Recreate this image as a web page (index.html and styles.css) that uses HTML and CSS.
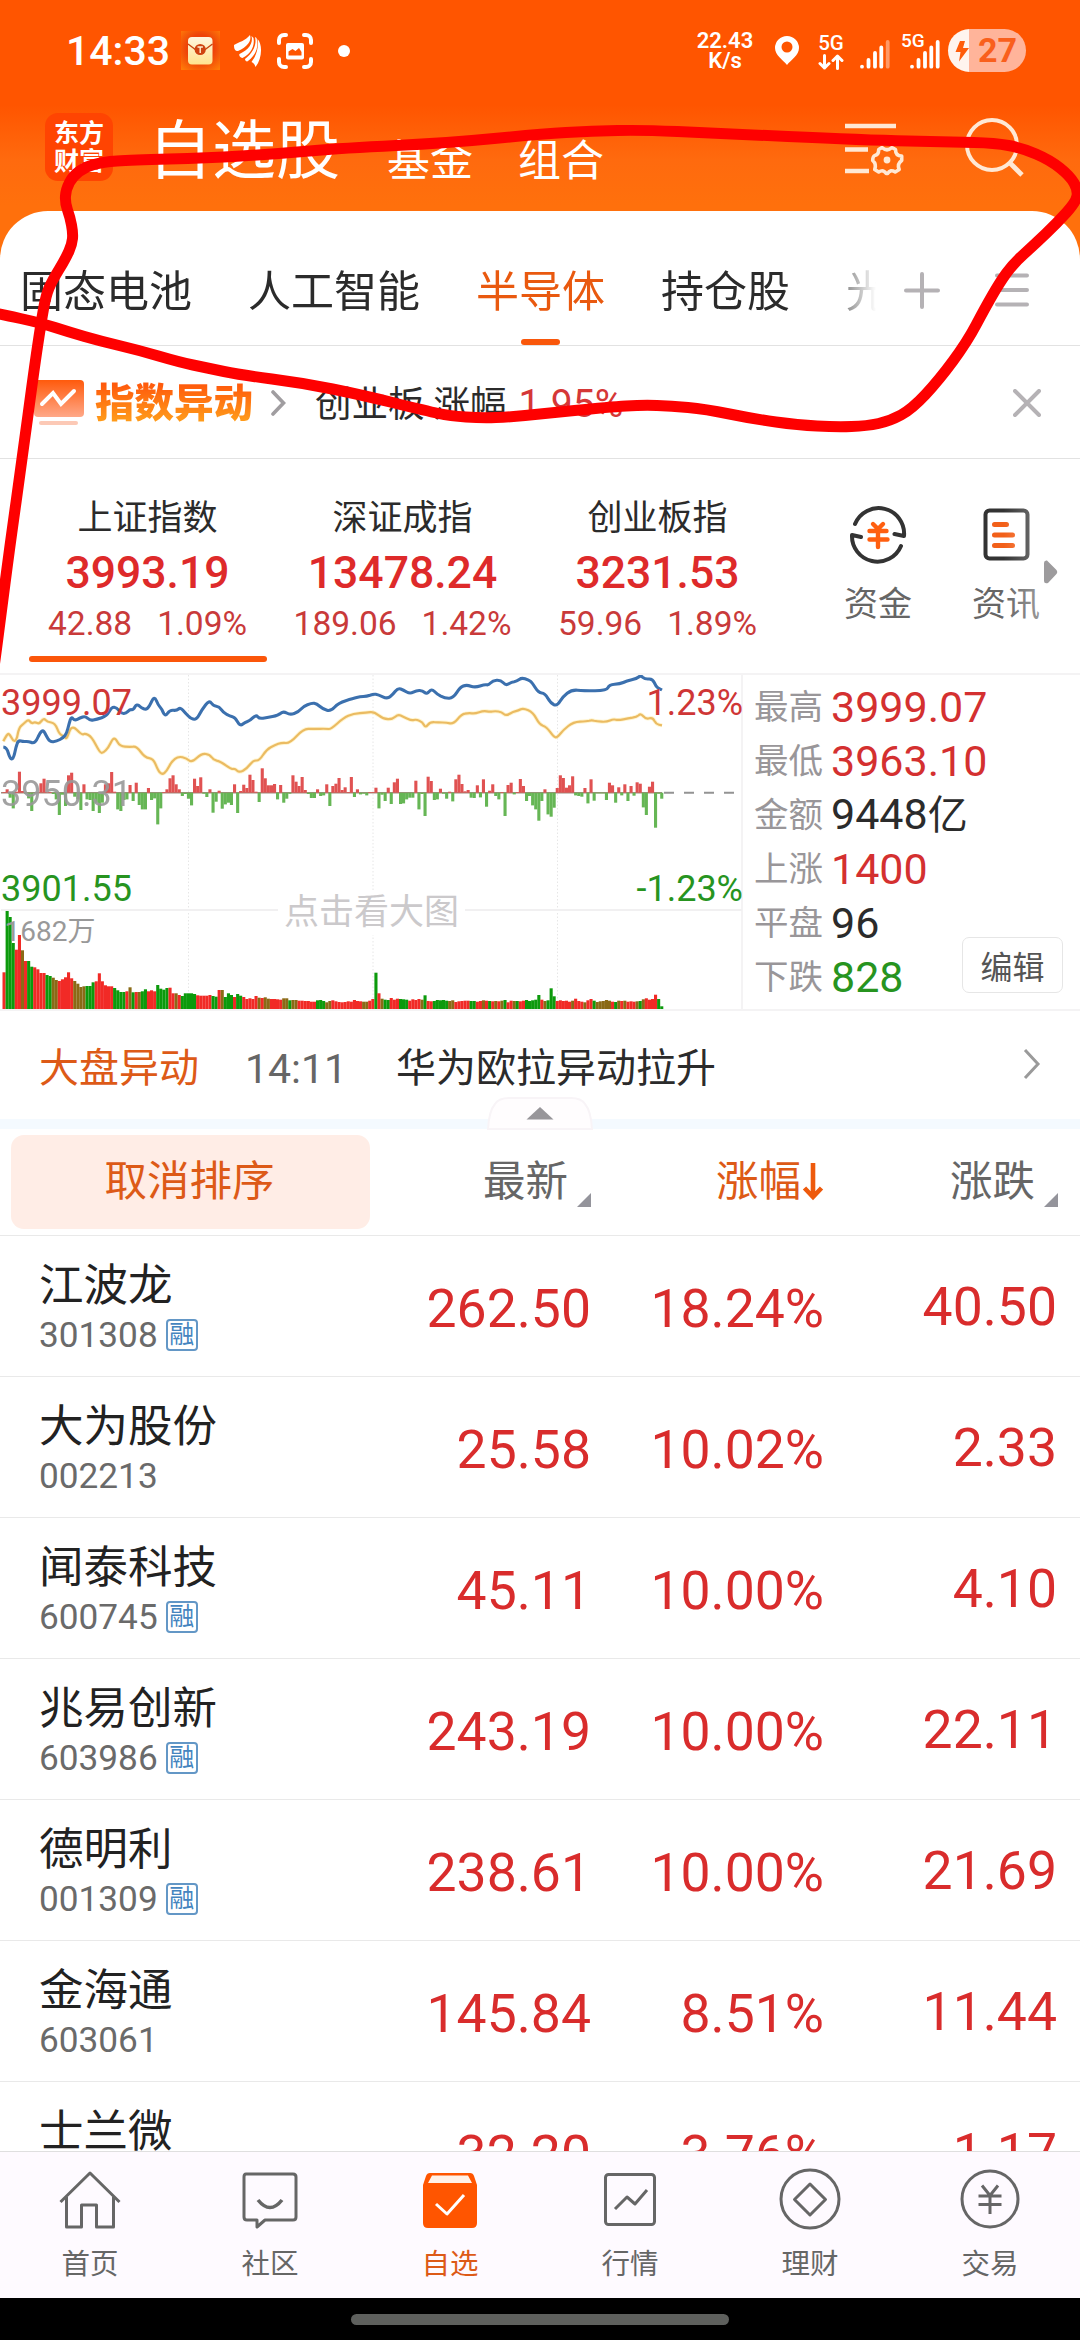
FILE: index.html
```html
<!DOCTYPE html>
<html lang="zh-CN">
<head>
<meta charset="utf-8">
<title>自选股</title>
<link rel="stylesheet" href="styles.css">
</head>
<body>
<div class="phone">
  <header class="top">
    <div class="status">
      <span class="clock">14:33</span>
      <svg class="st-mail" width="39" height="39" viewBox="0 0 39 39"><defs><radialGradient id="mg" cx=".5" cy=".45" r=".7"><stop offset=".5" stop-color="#ee4309"/><stop offset="1" stop-color="#ff7a08"/></radialGradient><linearGradient id="mc" x1="0" y1="0" x2="0" y2="1"><stop offset="0" stop-color="#fff6df"/><stop offset="1" stop-color="#ffe38e"/></linearGradient></defs><rect width="39" height="39" fill="url(#mg)"/><rect x="7" y="6" width="24.500" height="27.500" rx="4" fill="url(#mc)"/><path d="M7 13l8 6M31.500 13l-8 6" stroke="#c8430f" stroke-width="1.400" fill="none"/><circle cx="19.200" cy="18.500" r="5.600" fill="#cf4310"/><path d="M16.500 16h5.400M19.200 16v6" stroke="#fff0cf" stroke-width="1.400"/></svg>
      <svg class="st-wing" width="28" height="33" viewBox="0 0 28 33" fill="#fff"><path d="M0 11C5 8 11 7 16 1c2 6-3 12-12 16C1 17 0 15 0 11z"/><path d="M17.500 2c2 7-3 14-12 18-1 1 1 4 3 4C17 20 21 12 19.500 4z"/><path d="M21 3c2 8-2 16-10 22 0 2 2 3 3 2C22 21 25 13 22.500 4z"/><path d="M23.500 5c5 5 5 19-2 28-1-3-2-4-4-5 6-8 7-15 6-23z"/></svg>
      <svg class="st-scan" width="36" height="36" viewBox="0 0 36 36" fill="none" stroke="#fff" stroke-width="4" stroke-linecap="round"><path d="M2 10V7a5 5 0 0 1 5-5h2M27 2h2a5 5 0 0 1 5 5v3M34 26v3a5 5 0 0 1-5 5h-2M9 34H7a5 5 0 0 1-5-5v-3"/><rect x="9" y="10" width="18" height="16.500" rx="2" fill="#fff" stroke="none"/><path d="M11.500 22.500l0-4 4-2.500 3 2 3.500-3 2.500 4v3.500z" fill="#ff5500" stroke="none"/></svg>
      <i class="st-dot"></i>
      <div class="speed"><span>22.43</span><span>K/s</span></div>
      <svg class="st-pin" width="26" height="31" viewBox="0 0 26 31"><path d="M13 1a12 12 0 0 0-12 12c0 7 8 12 12 17 4-5 12-10 12-17A12 12 0 0 0 13 1z" fill="#fff"/><circle cx="13" cy="12" r="5.500" fill="#ff5500"/></svg>
      <span class="net">5G<svg width="26" height="16" viewBox="0 0 26 16" fill="none" stroke="#fff" stroke-width="3" stroke-linecap="round" stroke-linejoin="round"><path d="M6.500 1.500v12.500M2 9.500l4.500 4.500L11 9.500M19.500 14.500V2M15 6.500L19.500 2 24 6.500"/></svg></span>
      <svg class="st-sig" width="30" height="29" viewBox="0 0 30 29" stroke="#fff" stroke-width="3.800" stroke-linecap="round"><path d="M2 26.600v.1M8.500 20v6.700M15 13v13.700M21.300 7.500v19.200"/><path d="M27.700 2v24.700" opacity=".4"/></svg>
      <span class="net2">5G</span>
      <svg class="st-sig2" width="30" height="29" viewBox="0 0 30 29" stroke="#fff" stroke-width="3.800" stroke-linecap="round"><path d="M2 26.600v.1M8.500 20v6.700M15 13v13.700M21.300 7.500v19.200M27.700 2v24.700"/></svg>
      <span class="battery"><svg width="21" height="42" viewBox="0 0 21 42"><path d="M12 11L7.500 22h5l-1.500 9.500L21 18h-6l2-7z" fill="#ff5c0a"/></svg><b>27</b></span>
    </div>
    <div class="title-row">
      <div class="logo">东方<br>财富</div>
      <h1>自选股</h1>
      <span class="sub">基金</span>
      <span class="sub">组合</span>
      <svg class="hd-list" width="60" height="60" viewBox="0 0 60 60" fill="none" stroke="#ffe8d4" stroke-width="4.600"><path d="M0 7h51M0 30.500h23M0 52h24"/><path d="M37 28.500q5 4.500 10 0l3.500 2q0 6.500 6.200 6.500v4.500q-5 3.500-2.500 9l-4 2.500q-5-3-7.500 1.500h-1.500q-3-4.500-7.500-1.500l-4-2.500q2-5.500-2-9 0-4 2-5 4-.5 4-6z" stroke-width="3.600" stroke-linejoin="round"/><circle cx="42" cy="41" r="3.400" fill="#ffe8d4" stroke="none"/></svg>
      <svg class="hd-search" width="60" height="62" viewBox="0 0 60 62" fill="none" stroke="#ffe8d4" stroke-width="4"><circle cx="27" cy="29" r="25"/><path d="M44.500 46.500L57 59" stroke-width="4.800"/></svg>
    </div>
  </header>

  <main class="sheet">
    <nav class="tabs">
      <div class="tab-list">
        <span>固态电池</span><span>人工智能</span><span class="on">半导体</span><span>持仓股</span><span>光</span>
      </div>
      <svg class="plus" width="36" height="37" viewBox="0 0 36 37"><path d="M2 18.500h32M18 2v33" stroke="#b5b2b5" stroke-width="4" stroke-linecap="round"/></svg>
      <svg class="menu" width="34" height="34" viewBox="0 0 34 34"><path d="M2 2.500h30M2 17h30M2 31.500h30" stroke="#b5b2b5" stroke-width="4" stroke-linecap="round"/></svg>
    </nav>

    <section class="alert">
      <svg width="52" height="48" viewBox="0 0 52 48"><defs><linearGradient id="ag" x1="0" y1="0" x2="0" y2="1"><stop offset="0" stop-color="#ff5a0c"/><stop offset="1" stop-color="#ffa888"/></linearGradient></defs><rect x="1" y="1" width="50" height="37" rx="4" fill="url(#ag)"/><path d="M9 25l11-11 8 11 13-13" fill="none" stroke="#fff" stroke-width="4" stroke-linecap="round"/><rect x="6" y="42" width="39" height="4" rx="2" fill="#fcc9b6"/></svg>
      <b>指数异动</b>
      <svg class="chev" width="15" height="26" viewBox="0 0 15 26"><path d="M2 2l10.500 11L2 24" fill="none" stroke="#a09da0" stroke-width="3.600" stroke-linecap="round"/></svg>
      <p>创业板 涨幅 <em>1.95%</em></p>
      <svg class="close" width="28" height="28" viewBox="0 0 28 28"><path d="M2 2l24 24M26 2L2 26" stroke="#b5b2b5" stroke-width="4" stroke-linecap="round"/></svg>
    </section>

    <section class="indices">
      <div class="index on"><h2>上证指数</h2><strong>3993.19</strong><p><span>42.88</span><span>1.09%</span></p></div>
      <div class="index"><h2>深证成指</h2><strong>13478.24</strong><p><span>189.06</span><span>1.42%</span></p></div>
      <div class="index"><h2>创业板指</h2><strong>3231.53</strong><p><span>59.96</span><span>1.89%</span></p></div>
      <div class="tool">
        <svg width="60" height="60" viewBox="0 0 60 60" fill="none" stroke="#333" stroke-width="4" stroke-linecap="round" stroke-linejoin="round"><path d="M7 20a25.500 25.500 0 0 1 49 12l-9.500-2"/><path d="M53 42A25.500 25.500 0 0 1 4 31l9 2"/><path d="M25 20l5 5 5-5M21.500 27h17M21.500 35.500h18M30 26v17" stroke="#ff5f10" stroke-width="4.400"/></svg>
        <span>资金</span>
      </div>
      <div class="tool">
        <svg width="60" height="60" viewBox="0 0 60 60" fill="none" stroke-linecap="round"><rect x="9.500" y="6.500" width="42" height="48" rx="4" stroke="#333" stroke-width="4"/><path d="M18.500 20.500h12M18.500 31h18M18.500 41.500h18" stroke="#f26019" stroke-width="5"/></svg>
        <span>资讯</span>
      </div>
      <i class="fade"></i>
      <svg class="more" width="14" height="24" viewBox="0 0 14 24"><path d="M0 3Q0 0 3 0.500L12 9.500q2.500 2.500 0 5L4 23Q0 24 0 21z" fill="#9d9b9d"/></svg>
    </section>

    <section class="board">
      <div class="chart">
        <svg id="trend" width="742" height="336" viewBox="0 0 742 336"></svg>
        <span class="lb hi">3999.07</span>
        <span class="lb hi right">1.23%</span>
        <span class="lb mid">3950.31</span>
        <span class="lb lo">3901.55</span>
        <span class="lb lo right">-1.23%</span>
        <span class="lb big">点击看大图</span>
      </div>
      <dl class="stats">
        <div><dt>最高</dt><dd class="up">3999.07</dd></div>
        <div><dt>最低</dt><dd class="up">3963.10</dd></div>
        <div><dt>金额</dt><dd>9448<small>亿</small></dd></div>
        <div><dt>上涨</dt><dd class="up">1400</dd></div>
        <div><dt>平盘</dt><dd>96</dd></div>
        <div><dt>下跌</dt><dd class="down">828</dd></div>
        <button class="edit">编辑</button>
      </dl>
    </section>

    <section class="news">
      <b>大盘异动</b><time>14:11</time><p>华为欧拉异动拉升</p>
      <svg width="18" height="32" viewBox="0 0 18 32"><path d="M2 2l13 14L2 30" fill="none" stroke="#9a9a9a" stroke-width="3"/></svg>
      <svg class="fold" width="106" height="33" viewBox="0 0 106 33"><path d="M1 32q1-18 7-25 4-6 14-6h62q10 0 14 6 6 7 7 25z" fill="#fffdfe" stroke="#f8f4f7" stroke-width="2"/><path d="M53 10l13.500 12.500h-27z" fill="#98969a"/></svg>
    </section>

    <section class="table">
      <div class="thead">
        <button class="unsort">取消排序</button>
        <span class="c1">最新<i></i></span>
        <span class="c2">涨幅<svg width="22" height="38" viewBox="0 0 22 38"><path d="M11 0v33M2.500 25l8.500 9 8.500-9" fill="none" stroke="#ee5a0c" stroke-width="4.600"/></svg></span>
        <span class="c3">涨跌<i></i></span>
      </div>
      <div class="row"><div class="nm">江波龙<small>301308<u>融</u></small></div><span class="c1">262.50</span><span class="c2">18.24%</span><span class="c3">40.50</span></div>
      <div class="row"><div class="nm">大为股份<small>002213</small></div><span class="c1">25.58</span><span class="c2">10.02%</span><span class="c3">2.33</span></div>
      <div class="row"><div class="nm">闻泰科技<small>600745<u>融</u></small></div><span class="c1">45.11</span><span class="c2">10.00%</span><span class="c3">4.10</span></div>
      <div class="row"><div class="nm">兆易创新<small>603986<u>融</u></small></div><span class="c1">243.19</span><span class="c2">10.00%</span><span class="c3">22.11</span></div>
      <div class="row"><div class="nm">德明利<small>001309<u>融</u></small></div><span class="c1">238.61</span><span class="c2">10.00%</span><span class="c3">21.69</span></div>
      <div class="row"><div class="nm">金海通<small>603061</small></div><span class="c1">145.84</span><span class="c2">8.51%</span><span class="c3">11.44</span></div>
      <div class="row"><div class="nm">士兰微</div><span class="c1">32.20</span><span class="c2">3.76%</span><span class="c3">1.17</span></div>
    </section>
  </main>

  <nav class="bottom">
    <a><svg width="64" height="64" viewBox="0 0 64 64"><path d="M2.500 34L32 5l29.500 29M8.500 29v30h15V37h15v22h17V29"/></svg>首页</a>
    <a><svg width="64" height="64" viewBox="0 0 64 64"><path d="M8 6h47q3 0 3 3v40q0 3-3 3H27l-8 7v-7H9q-3 0-3-3V9q0-3 2-3z"/><path d="M20 32q12 15 24 0" stroke-width="3.600"/></svg>社区</a>
    <a class="on"><svg width="64" height="64" viewBox="0 0 64 64"><path d="M12 5h40q3 0 4 3l3 9v38q0 5-5 5H10q-5 0-5-5V17l3-9q1-3 4-3z" fill="#ff5500" stroke="none"/><path d="M14 7.500h36l4 7.500H10z" fill="#fff1e8" stroke="none"/><path d="M18 36l11 10 17-19" stroke="#fff"/></svg>自选</a>
    <a><svg width="64" height="64" viewBox="0 0 64 64"><rect x="7.500" y="6.500" width="49" height="50" rx="3"/><path d="M17 41l12-12 8 7 12-14"/></svg>行情</a>
    <a><svg width="64" height="64" viewBox="0 0 64 64"><circle cx="32" cy="31" r="29"/><path d="M32 16l15.500 15.500L32 47 16.500 31.500z"/></svg>理财</a>
    <a><svg width="64" height="64" viewBox="0 0 64 64"><circle cx="32" cy="31" r="28"/><path d="M24 17.500l8 10 8-10M20.500 28h23M20.500 36.500h23M32 27v19"/></svg>交易</a>
  </nav>
  <div class="home"><i></i></div>

  <svg class="ink" width="1080" height="680" viewBox="0 0 1080 680"><path id="ink"/></svg>
</div>
<script src="chart.js"></script>
</body>
</html>
```
FILE: styles.css
```css
* { box-sizing: border-box; margin: 0; padding: 0; }
body { width: 1080px; height: 2340px; overflow: hidden; background: #fff; }
i, em, u { font-style: normal; text-decoration: none; }
svg { display: block; flex: none; }
button { border: 0; font: inherit; }

.phone {
  position: relative;
  width: 1080px;
  height: 2340px;
  overflow: hidden;
  display: flex;
  flex-direction: column;
  background: linear-gradient(#ff5500 0, #ff5500 105px, #ff6a0e 160px, #ff700c 205px);
  font-family: "Roboto", "Noto Sans CJK SC", sans-serif;
  font-weight: 400;
  color: #2b2b2b;
  white-space: nowrap;
}

/* header */
.top { height: 211px; flex: none; color: #fff; }
.status { height: 101px; display: flex; align-items: center; padding-left: 66px; }
.clock { width: 115px; font-size: 41px; font-weight: 500; line-height: 48px; }
.st-wing { margin-left: 14px; }
.st-scan { margin-left: 15px; }
.st-dot { width: 12px; height: 12px; border-radius: 50%; background: #fff; margin-left: 25px; }
.speed { width: 58px; margin-left: 346px; display: flex; flex-direction: column; align-items: center; font-size: 22px; line-height: 20px; font-weight: 600; }
.st-pin { margin-left: 20px; }
.net { width: 26px; margin: 3px 0 0 18px; font-size: 20.500px; font-weight: 500; line-height: 18px; text-align: center; display: flex; flex-direction: column; align-items: center; gap: 2px; }
.st-sig { margin: 7px 0 0 16px; }
.net2 { width: 24px; margin: -19px 0 0 11px; font-size: 19px; font-weight: 500; line-height: 20px; }
.st-sig2 { margin: 7px 0 0 -15px; }
.battery { width: 78px; height: 43px; margin-left: 8px; border-radius: 22px; overflow: hidden; display: flex; align-items: center; background: linear-gradient(90deg, #fff4ee 21px, #ffb49a 21px); }
.battery b { margin-left: 9px; font-size: 34px; line-height: 43px; font-weight: 700; color: #f95f1c; }

.title-row { height: 110px; display: flex; align-items: flex-start; padding-left: 45px; }
.logo { width: 68px; height: 68px; margin-top: 12px; border-radius: 13px; background: #ff4402; font-size: 25px; font-weight: 700; line-height: 28px; padding-top: 7px; text-align: center; }
.title-row h1 { margin: 9px 49px 0 35px; font-size: 64px; font-weight: 400; line-height: 84px; }
.sub { font-size: 43px; line-height: 60px; margin: 30px 45px 0 -2px; }
.sub + .sub { margin-left: 0; }
.hd-list { margin: 18px 0 0 196px; }
.hd-search { margin: 15px 0 0 60px; }

/* sheet */
.sheet { height: 1940px; flex: none; overflow: hidden; background: #fff; border-radius: 48px 48px 0 0; }
.tabs { height: 135px; border-bottom: 1px solid #e2e2e2; display: flex; align-items: center; padding-left: 20px; }
.tab-list { width: 856px; height: 134px; display: flex; gap: 56px; overflow: hidden; font-size: 43px; line-height: 163px; -webkit-mask-image: linear-gradient(90deg, #000 800px, transparent 856px); mask-image: linear-gradient(90deg, #000 800px, transparent 856px); }
.tab-list .on { color: #e9590f; display: flex; flex-direction: column; align-items: center; }
.tab-list .on::after { content: ""; width: 39px; height: 6px; margin-top: -35px; border-radius: 3px; background: #f9570b; flex: none; }
.plus { margin: 24px 0 0 28px; }
.menu { margin: 24px 0 0 55px; }

.alert { height: 113px; border-bottom: 1px solid #e2e2e2; display: flex; align-items: center; padding: 2px 39px 0 33px; }
.alert b { margin-left: 10px; font-size: 39.500px; line-height: 60px; padding-top: 2px; font-weight: 800; background: linear-gradient(#ff5a0c 20%, #ff9c1a 80%); -webkit-background-clip: text; background-clip: text; color: transparent; }
.chev { margin-left: 18px; }
.alert p { margin: 2px auto 0 29px; font-size: 36.500px; line-height: 60px; }
.alert em { margin-left: 3px; font-size: 39px; color: #d53737; }

.indices { position: relative; height: 214px; display: flex; padding-left: 20px; }
.index { width: 255px; flex: none; display: flex; flex-direction: column; align-items: center; padding-top: 38px; }
.index h2 { font-size: 35px; line-height: 44px; font-weight: 400; }
.index strong { margin-top: 3px; font-size: 44.500px; line-height: 58px; font-weight: 500; color: #de2a2a; }
.index p { display: flex; gap: 25px; font-size: 33.500px; line-height: 44px; color: #c93a3a; }
.index.on::after { content: ""; width: 238px; height: 6px; margin-top: 10px; border-radius: 3px; background: #fb560a; }
.tool { width: 128px; margin-top: 45px; display: flex; flex-direction: column; align-items: center; font-size: 34px; line-height: 44px; gap: 18px; color: #666; }
.indices .tool:nth-of-type(4) { margin-left: 29px; }
.fade { position: absolute; left: 990px; top: 30px; width: 90px; height: 150px; background: linear-gradient(90deg, rgba(255,255,255,0) 15%, rgba(255,255,255,.7)); }
.more { position: absolute; left: 1044px; top: 101px; }

.board { height: 338px; border-top: 2px solid #f4f3f4; border-bottom: 2px solid #f4f3f4; display: flex; }
.chart { position: relative; width: 743px; height: 334px; border-right: 2px solid #f4f3f4; }
.lb { position: absolute; left: 1px; font-size: 36px; line-height: 44px; }
.lb.right { left: auto; right: -2px; }
.lb.hi { top: 6px; color: #cf3636; }
.lb.mid { top: 97px; color: #999; opacity: .9; }
.lb.lo { top: 192px; color: #27941f; }
.lb.big { left: 278px; top: 216px; padding: 0 6px; font-size: 35px; color: #cbc9cb; background: #fff; }
.vol { font-size: 28px; fill: #999; }
.stats { position: relative; flex: 1; padding: 5px 0 0 11px; }
.stats div { display: flex; height: 54px; align-items: center; }
.stats dt { width: 77px; font-size: 34.500px; line-height: 54px; color: #999699; }
.stats dd { font-size: 43px; line-height: 54px; }
.stats small { font-size: 40px; }
.stats .up { color: #d43030; }
.stats .down { color: #27941f; }
.edit { position: absolute; left: 219px; top: 262px; width: 101px; height: 56px; padding-top: 5px; border: 1px solid #e6e6e6; border-radius: 7px; background: #fff; font-size: 32px; line-height: 48px; color: #555; }

.news { position: relative; height: 118px; border-bottom: 10px solid #f4faff; display: flex; align-items: center; padding: 7px 39px 0 39px; font-size: 40px; line-height: 60px; }
.news b { font-weight: 400; color: #dd5a17; }
.news time { margin-left: 46px; width: 151px; font-size: 41px; color: #666; }
.news > svg:not(.fold) { margin-left: auto; margin-top: -10px; }
.fold { position: absolute; left: 487px; top: 86px; }

/* table */
.thead, .row { display: flex; align-items: center; border-bottom: 1px solid #e9e9e9; }
.thead { height: 107px; font-size: 42.500px; color: #666; }
.unsort { width: 359px; height: 94px; margin: 0 0 0 11px; border-radius: 13px; background: #ffede6; color: #dd5a17; line-height: 92px; padding-right: 2px; }
.thead span { display: flex; justify-content: flex-end; align-items: center; line-height: 62px; }
.thead i { border: 7px solid transparent; border-width: 0 0 14px 14px; border-bottom-color: #94949b; margin: 35px 0 0 9px; }
.thead .c2 { color: #dd5a17; }
.thead .c2 svg { margin-left: 1px; }
.thead .c1 { width: 221px; }
.thead .c2 { width: 233px; }
.thead .c3 { width: 234px; }
.row { height: 141px; font-size: 53.500px; line-height: 70px; color: #d92c2c; text-align: right; }
.nm { width: 330px; height: 141px; padding: 25px 0 0 39px; text-align: left; font-size: 44.500px; line-height: 50px; color: #222; }
.nm small { display: flex; align-items: center; gap: 8px; font-size: 35.200px; line-height: 48px; color: #6a6a6a; }
.nm u { width: 32px; height: 32px; border: 2px solid #6397c6; border-radius: 4px; font-size: 25px; line-height: 28px; text-align: center; color: #4585bf; display: flex; justify-content: center; }
.row span { padding-top: 6px; }
.row .c1 { width: 261px; }
.row .c2 { width: 233px; }
.row .c3 { width: 233px; padding-top: 1px; }

/* bottom bar */
.bottom { height: 147px; flex: none; display: flex; background: #fefaff; border-top: 1px solid #dfdfdf; }
.bottom a { width: 180px; display: flex; flex-direction: column; align-items: center; padding-top: 16px; gap: 13px; font-size: 28.500px; line-height: 40px; color: #666; }
.bottom svg { fill: none; stroke: #666; stroke-width: 3; stroke-linejoin: round; }
.bottom .on { color: #dd5a17; }
.home { height: 42px; flex: none; background: #000; display: flex; justify-content: center; align-items: flex-start; padding-top: 16px; }
.home i { width: 378px; height: 11px; border-radius: 6px; background: #5e605d; }

.ink { position: absolute; left: 0; top: 0; pointer-events: none; }
.ink path { fill: none; stroke: #fe0000; stroke-width: 11; stroke-linejoin: round; stroke-linecap: round; }
```
FILE: chart.js
```js
// Intraday trend chart. Values are in thirds of a pixel, measured from the chart's top left.
const TOP = 47, STEP = 9.22, FIRST = 12, ZERO = 400, FLOOR = 1049;

const blue = [10,263,20,264,30,298,40,300,48,262,55,243,70,247,85,246,100,252,110,243,120,220,130,212,138,228,150,248,170,246,190,235,200,222,208,190,214,172,224,184,240,176,256,170,270,184,290,180,320,170,335,143,350,145,365,163,378,162,390,150,400,152,410,133,425,146,437,151,448,142,463,109,475,138,485,148,495,172,510,152,530,154,541,144,555,160,575,180,590,180,605,152,628,122,640,140,658,142,670,160,690,170,705,174,720,201,735,189,750,184,768,166,778,178,800,175,835,168,850,155,870,167,895,158,910,141,935,131,950,133,970,150,992,156,1015,131,1060,117,1080,112,1100,111,1120,104,1135,106,1162,119,1178,106,1194,86,1210,92,1230,104,1250,93,1268,94,1280,105,1295,88,1310,104,1335,117,1360,116,1380,84,1400,76,1425,85,1455,75,1465,78,1478,64,1502,62,1518,79,1535,68,1550,66,1565,55,1585,62,1595,68,1615,100,1635,102,1652,132,1672,140,1688,112,1715,91,1750,94,1820,94,1828,76,1860,74,1880,65,1910,58,1922,48,1935,60,1958,58,1968,82,1978,88,1986,92];
const gold = [10,246,22,222,30,226,40,246,50,242,57,205,70,194,85,180,95,193,105,188,118,194,131,176,142,188,165,191,178,225,195,232,200,240,215,196,245,227,255,222,275,232,300,281,310,280,325,265,338,238,347,238,360,261,390,263,410,261,435,295,460,298,475,335,487,346,500,335,515,306,535,291,560,297,575,310,605,282,630,286,640,302,660,306,695,330,705,328,718,340,740,328,760,303,778,304,800,270,825,257,845,250,870,252,910,208,940,209,980,208,992,210,1030,176,1060,163,1100,160,1122,157,1150,179,1178,180,1194,165,1210,172,1235,184,1248,180,1268,188,1276,206,1290,188,1315,189,1340,190,1360,194,1385,165,1405,161,1425,163,1450,154,1470,158,1485,155,1505,158,1518,170,1540,157,1555,154,1570,146,1600,160,1618,195,1640,203,1662,234,1672,234,1690,212,1720,188,1760,186,1775,182,1790,186,1820,188,1840,179,1855,183,1885,177,1910,173,1922,162,1938,180,1958,174,1968,194,1986,198];
const flow = [2,10,-15,-47,3,63,5,-3,-17,-55,-2,2,28,42,2,2,-4,-20,-67,-6,-40,52,60,-12,-20,-52,25,-20,-22,-55,-30,-61,-30,25,28,62,3,-50,-55,-22,-20,23,-25,30,-37,-50,-50,14,-22,-17,-95,-47,2,10,43,52,25,10,-10,-4,-18,-38,42,20,46,-3,-13,10,-60,-27,6,-48,-35,-30,-37,25,-61,5,24,14,54,38,3,-28,73,43,22,22,26,-20,23,-30,-18,-3,52,33,20,47,8,-4,-16,-16,10,-10,-8,25,-40,20,27,44,8,16,2,47,-13,10,-5,-3,-8,2,2,15,-47,-6,-25,15,-34,31,42,-34,-32,-20,-15,-15,36,-50,-4,-70,48,35,-22,-20,12,-3,-18,3,-26,40,54,26,4,8,-15,-16,22,-14,40,-42,6,25,-10,-20,2,-70,23,30,-5,2,41,20,-25,-10,-38,-50,-84,-25,10,-65,-72,-45,14,52,44,15,22,49,-8,-10,-12,14,-32,40,-24,-2,-2,-2,-22,30,22,-30,16,-8,25,-25,20,-9,31,27,-44,-67,18,33,-105,-3,-18];
const volume = [110,294,276,198,178,222,176,144,144,127,125,119,108,108,102,99,94,87,84,89,95,110,92,84,76,66,68,69,69,80,83,107,83,71,68,68,63,56,51,51,53,65,50,51,51,53,59,53,56,53,72,61,58,63,64,47,47,42,39,47,47,47,45,41,40,40,40,42,39,37,57,57,36,47,42,36,45,40,36,30,32,30,39,34,33,35,31,30,30,29,28,32,32,26,27,27,25,25,24,24,22,22,26,27,24,20,24,26,23,21,20,21,23,22,27,24,23,22,22,25,30,109,47,31,28,27,33,28,31,30,29,28,25,29,27,30,28,41,24,23,24,27,26,27,25,24,26,21,23,24,25,25,24,24,22,24,26,25,24,23,24,23,25,27,20,25,24,24,23,25,27,24,26,28,42,28,24,26,62,38,24,26,24,25,22,25,31,24,22,20,26,30,25,21,23,24,27,25,22,21,25,24,25,22,23,22,23,24,29,32,28,30,43,30,8];
const colors = 'RGGGRRMRGGRRRRGGMMRRRRRMMMMGGGRRRRRRGGGGRMGRMGGRRRGGGGRRMRGGGGGRRRRRGGRMGGGRGGRRRRRMRMMRRRRMMGMMRRRRRRGGGMMRRRRRRRRRRMMRRGRMGGRRRGGGRRRRMGRRGGGGGMMRRRRRGGRRMRGRMRMGRRMGRRGGGGGRMGGGRRRRRMRRRMRRGMMMMMRGMRMRRRMGMRRRRGGG';
const fill = { R: '#f12a26', G: '#0c9a0c', M: '#8a6a16' };

const smooth = (p, k = 1, dy = 0) => {
  let d = `M${p[0] / k} ${p[1] / k - dy}`;
  for (let i = 2; i < p.length - 2; i += 2) {
    const mx = (p[i] + p[i + 2]) / 2, my = (p[i + 1] + p[i + 3]) / 2;
    d += `Q${(p[i] / k).toFixed(1)} ${(p[i + 1] / k - dy).toFixed(1)} ${(mx / k).toFixed(1)} ${(my / k - dy).toFixed(1)}`;
  }
  return d + `L${p[p.length - 2] / k} ${p[p.length - 1] / k - dy}`;
};
const y = v => v / 3 - TOP / 3;

let out = '';
for (const x of [188.5, 373, 557.5]) out += `<path d="M${x} 0V334" stroke="#e6e6e6" stroke-dasharray="1.500 2"/>`;
out += `<path d="M1 ${y(752)}H742" stroke="#f1f0f1" stroke-width="2"/>`;
out += `<path d="M664 ${y(ZERO)}H742" stroke="#939393" stroke-width="2" stroke-dasharray="10 10"/>`;
out += `<path d="M1 ${y(ZERO)}H662" stroke="#a08a7c" stroke-width="1.500"/>`;
flow.forEach((v, i) => {
  const x = (FIRST - 4.5 + STEP * i) / 3;
  out += `<rect x="${x.toFixed(1)}" y="${y(v > 0 ? ZERO - v : ZERO).toFixed(1)}" width="3.100" height="${(Math.abs(v) / 3).toFixed(1)}" fill="${v > 0 ? '#e05252' : '#66b655'}"/>`;
});
volume.forEach((v, i) => {
  const x = (FIRST - 4.5 + STEP * i) / 3;
  out += `<rect x="${x.toFixed(1)}" y="${y(FLOOR - v).toFixed(1)}" width="3.100" height="${(v / 3).toFixed(1)}" fill="${fill[colors[i] || 'R']}"/>`;
});
out += `<text class="vol" x="4.500" y="${y(846)}">1682万</text>`;
out += `<path d="${smooth(gold, 3, TOP / 3)}" fill="none" stroke="#ffeeb0" stroke-width="4" opacity=".6"/>`;
out += `<path d="${smooth(gold, 3, TOP / 3)}" fill="none" stroke="#ebbb62" stroke-width="2.200"/>`;
out += `<path d="${smooth(blue, 3, TOP / 3)}" fill="none" stroke="#3b70ae" stroke-width="3.100"/>`;
document.getElementById('trend').innerHTML = out;

// Freehand marker stroke across the header.
const ink = [-12,710,-6,668,0,622,10,545,22,460,34,370,41,323,46,295,52,281,66,258,72,244,73,233,70,217,65,203,66,189,73,176,85,167,103,162,131,160,207,158,275,154,344,148,448,143,540,134,592,131,643,130,712,133,864,140,953,142,995,143,1022,148,1050,160,1070,176,1078,190,1076,202,1057,223,1035,244,1013,264,1000,282,985,308,967,342,939,380,912,409,890,421,867,426,836,427,798,425,754,419,705,409,671,406,643,405,609,407,540,414,510,417,482,418,450,416,427,411,362,395,303,383,241,375,207,368,179,362,138,350,100,341,69,332,41,323,0,314,-8,313];
document.getElementById('ink').setAttribute('d', smooth(ink));
```
